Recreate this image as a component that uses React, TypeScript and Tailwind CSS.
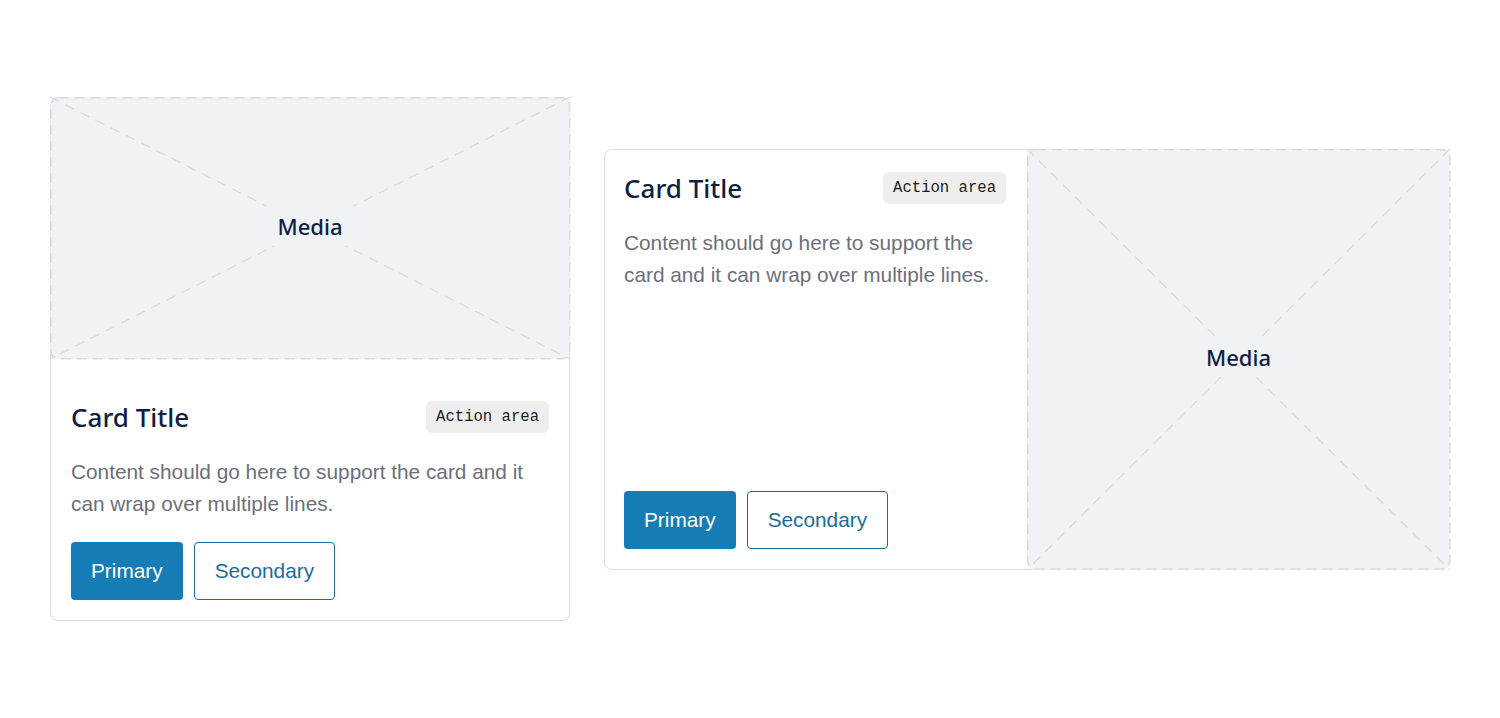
function Media({ className = "" }: { className?: string }) {
  return (
    <div className={`relative flex items-center justify-center rounded-lg bg-[#f1f2f6] ${className}`}>
      <svg className="absolute inset-0 h-full w-full overflow-visible" preserveAspectRatio="none" viewBox="0 0 100 100">
        <line x1="0" y1="0" x2="100" y2="100" stroke="#d8d9de" strokeWidth="1.3" strokeDasharray="10 7" vectorEffect="non-scaling-stroke" />
        <line x1="100" y1="0" x2="0" y2="100" stroke="#d8d9de" strokeWidth="1.3" strokeDasharray="10 7" vectorEffect="non-scaling-stroke" />
      </svg>
      <svg className="pointer-events-none absolute inset-0 h-full w-full overflow-visible">
        <rect x="0.75" y="0.75" width="99.8%" height="99.6%" rx="8" fill="none" stroke="#d8d9de" strokeWidth="1.5" strokeDasharray="10 6" />
      </svg>
      <span className="relative -translate-y-0.5 bg-[#f1f2f6] px-3 py-2 font-['Noto_Sans',sans-serif] text-[22px] font-medium leading-6 text-[#0e1f45]">
        Media
      </span>
    </div>
  );
}

function Header() {
  return (
    <div className="flex items-center justify-between">
      <h2 className="font-['Noto_Sans',sans-serif] text-[26px] font-medium leading-8 text-[#0e1f45]">Card Title</h2>
      <span className="rounded-md bg-[#efeeef] px-[10px] py-1.5 font-['Liberation_Mono',monospace] text-[15.6px] leading-5 text-[#1a1a1a]">
        Action area
      </span>
    </div>
  );
}

function Body() {
  return (
    <p className="mt-[23px] font-['Liberation_Sans',Arial,sans-serif] text-[20.8px] leading-8 text-[#6b6f7c]">
      Content should go here to support the card and it can wrap over multiple lines.
    </p>
  );
}

function Buttons() {
  return (
    <div className="flex gap-[11px] font-['Liberation_Sans',Arial,sans-serif] text-[20.8px] leading-7">
      <button className="h-[58px] rounded bg-[#167cb5] px-5 text-white">Primary</button>
      <button className="h-[58px] rounded border border-[#1b6c9c] bg-white px-5 text-[#1b6c9c]">Secondary</button>
    </div>
  );
}

export default function App() {
  return (
    <div className="flex h-[718px] items-center gap-[34px] bg-white px-[50px]">
      <div className="flex w-[520px] flex-col rounded-lg border border-[#dcdce0] bg-white">
        <Media className="-m-px h-[262px]" />
        <div className="px-5 pb-5 pt-[43px]">
          <Header />
          <Body />
          <div className="mt-[22px]">
            <Buttons />
          </div>
        </div>
      </div>

      <div className="grid h-[421px] w-[846px] grid-cols-2 rounded-lg border border-[#dcdce0] bg-white">
        <div className="flex flex-col pb-5 pl-[19px] pr-[21px] pt-[22px]">
          <Header />
          <Body />
          <div className="mt-auto">
            <Buttons />
          </div>
        </div>
        <Media className="-my-px -mr-px" />
      </div>
    </div>
  );
}
